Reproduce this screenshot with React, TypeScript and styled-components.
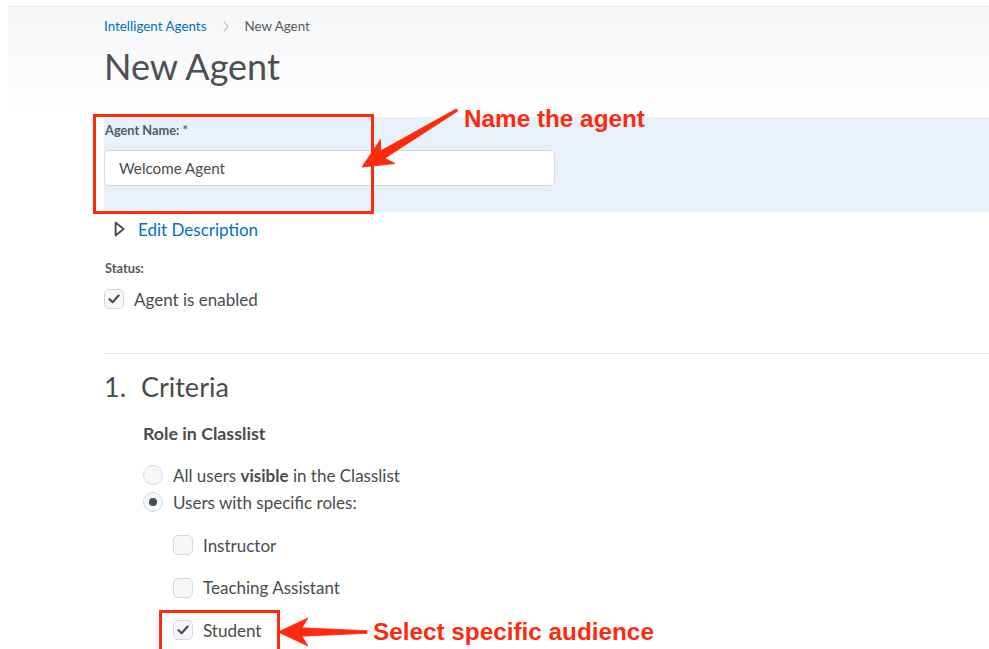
import React from "react";
import styled, { createGlobalStyle } from "styled-components";

const GlobalStyle = createGlobalStyle`
  html, body { margin: 0; padding: 0; background: #ffffff; }
  body {
    font-family: Lato, "Open Sans", "Noto Sans", sans-serif;
    color: #494c4e;
    -webkit-font-smoothing: antialiased;
  }
  * { box-sizing: border-box; }
`;

const Page = styled.div`
  position: relative;
  width: 989px;
  height: 649px;
  overflow: hidden;
  padding: 6px 0 0 8px;
`;

/* ---------- page header ---------- */

const Header = styled.header`
  height: 111px;
  border-top: 1px solid #e7e9ec;
  background: linear-gradient(#f5f6f8, #ffffff);
  padding: 10px 0 0 96px;
`;

const Breadcrumbs = styled.nav`
  display: flex;
  align-items: center;
  height: 18px;
  font-size: 13.4px;
`;

const Crumb = styled.a`
  color: #006fbf;
  text-decoration: none;
`;

const CrumbCurrent = styled.span`
  color: #565a5c;
`;

const CrumbSep = styled.svg`
  margin: 0 15px 0 17px;
  flex: none;
`;

const Title = styled.h1`
  margin: 10px 0 0;
  font-size: 36px;
  line-height: 42px;
  font-weight: 400;
  color: #4d5052;
`;

/* ---------- form ---------- */

const Content = styled.main`
  padding-left: 96px;
`;

const NameBand = styled.section`
  height: 95px;
  padding-top: 5px;
  background: #e8f1f9;
`;

const FieldLabel = styled.div<{ $gap?: number }>`
  margin-top: ${(p) => p.$gap ?? 0}px;
  padding-left: 1px;
  font-size: 12.8px;
  line-height: 16px;
  font-weight: 700;
  color: #565a5c;
`;

const TextInput = styled.input`
  display: block;
  margin-top: 12px;
  width: 451px;
  height: 36px;
  padding: 0 14px;
  border: 1px solid #d3d9e3;
  border-radius: 5px;
  background: #ffffff;
  font-family: inherit;
  font-size: 15.2px;
  color: #494c4e;
  outline: none;
`;

const Disclosure = styled.div`
  display: flex;
  align-items: center;
  gap: 13px;
  height: 20px;
  margin-top: 7px;
  padding-left: 10px;
`;

const LinkText = styled.a`
  color: #006fbf;
  font-size: 17px;
  text-decoration: none;
`;

const OptionRow = styled.label<{ $gap?: number }>`
  display: flex;
  align-items: center;
  gap: 10px;
  height: 20px;
  margin-top: ${(p) => p.$gap ?? 0}px;
  font-size: 17px;
  color: #494c4e;
`;

const CheckBox = styled.span`
  display: flex;
  align-items: center;
  justify-content: center;
  width: 20px;
  height: 20px;
  flex: none;
  border: 1px solid #d3d9e3;
  border-radius: 5px;
  background: #f6f7f8;
`;

const RadioDot = styled.span<{ $on?: boolean }>`
  display: flex;
  align-items: center;
  justify-content: center;
  width: 20px;
  height: 20px;
  flex: none;
  border: 1px solid #d3d9e3;
  border-radius: 50%;
  background: #f6f7f8;

  &::after {
    content: "";
    display: ${(p) => (p.$on ? "block" : "none")};
    width: 8px;
    height: 8px;
    border-radius: 50%;
    background: #494c4e;
  }
`;

const Divider = styled.hr`
  margin: 44px 0 0;
  border: 0;
  border-top: 1px solid #dfe3e8;
`;

const SectionHeading = styled.h2`
  display: flex;
  margin: 17px 0 0;
  font-size: 27px;
  line-height: 32px;
  font-weight: 400;
  color: #494c4e;
`;

const SectionNumber = styled.span`
  width: 37px;
  flex: none;
`;

const SectionBody = styled.div`
  padding-left: 39px;
`;

const SubHeading = styled.h3`
  margin: 20px 0 0;
  font-size: 17.8px;
  line-height: 20px;
  font-weight: 700;
  color: #494c4e;
`;

const Stack = styled.div<{ $gap: number; $top: number; $indent?: number }>`
  display: flex;
  flex-direction: column;
  gap: ${(p) => p.$gap}px;
  margin-top: ${(p) => p.$top}px;
  padding-left: ${(p) => p.$indent ?? 0}px;
`;

/* ---------- callouts drawn over the page ---------- */

const Overlay = styled.svg`
  position: absolute;
  inset: 0;
  pointer-events: none;
  overflow: visible;
`;

const Callout = styled.div<{ $x: number; $y: number }>`
  position: absolute;
  left: ${(p) => p.$x}px;
  top: ${(p) => p.$y}px;
  font-family: "Liberation Sans", Arial, sans-serif;
  font-weight: 700;
  font-size: 24.3px;
  line-height: 24px;
  color: #fe2a0e;
  white-space: nowrap;
`;

const RED = "#fe2a0e";

function Check() {
  return (
    <svg width="12" height="10" viewBox="0 0 12 10">
      <path
        d="M1.5 5.2 L4.6 8.2 L10.6 1.6"
        fill="none"
        stroke="#494c4e"
        strokeWidth="2.2"
        strokeLinecap="round"
        strokeLinejoin="round"
      />
    </svg>
  );
}

function Arrow({ x1, y1, x2, y2 }: { x1: number; y1: number; x2: number; y2: number }) {
  const dx = x2 - x1;
  const dy = y2 - y1;
  const L = Math.hypot(dx, dy);
  const deg = (Math.atan2(dy, dx) * 180) / Math.PI;
  const pts = [
    [0, -1.3],
    [L - 24, -4.2],
    [L - 30, -14],
    [L, 0],
    [L - 30, 14],
    [L - 24, 4.2],
    [0, 1.3],
  ]
    .map((p) => p.join(","))
    .join(" ");
  return (
    <g transform={`translate(${x1} ${y1}) rotate(${deg})`}>
      <polygon points={pts} fill={RED} stroke={RED} strokeWidth="0.8" strokeLinejoin="round" />
    </g>
  );
}

export default function App() {
  return (
    <>
      <GlobalStyle />
      <Page>
        <Header>
          <Breadcrumbs>
            <Crumb href="#">Intelligent Agents</Crumb>
            <CrumbSep width="6" height="11" viewBox="0 0 6 11">
              <path d="M0.8 0.8 L5 5.5 L0.8 10.2" fill="none" stroke="#b5bbc2" strokeWidth="1.1" />
            </CrumbSep>
            <CrumbCurrent>New Agent</CrumbCurrent>
          </Breadcrumbs>
          <Title>New Agent</Title>
        </Header>

        <Content>
          <NameBand>
            <FieldLabel>Agent Name: *</FieldLabel>
            <TextInput readOnly value="Welcome Agent" />
          </NameBand>

          <Disclosure>
            <svg width="11" height="16" viewBox="0 0 11 16">
              <path
                d="M1.6 1.6 L9.6 8 L1.6 14.4 Z"
                fill="none"
                stroke="#494c4e"
                strokeWidth="1.9"
                strokeLinejoin="round"
              />
            </svg>
            <LinkText href="#">Edit Description</LinkText>
          </Disclosure>

          <FieldLabel $gap={21}>Status:</FieldLabel>
          <OptionRow $gap={13}>
            <CheckBox>
              <Check />
            </CheckBox>
            Agent is enabled
          </OptionRow>

          <Divider />

          <SectionHeading>
            <SectionNumber>1.</SectionNumber>
            Criteria
          </SectionHeading>

          <SectionBody>
            <SubHeading>Role in Classlist</SubHeading>

            <Stack $gap={7} $top={22}>
              <OptionRow>
                <RadioDot />
                <span>
                  All users <b>visible</b> in the Classlist
                </span>
              </OptionRow>
              <OptionRow>
                <RadioDot $on />
                Users with specific roles:
              </OptionRow>
            </Stack>

            <Stack $gap={22.5} $top={23} $indent={30}>
              <OptionRow>
                <CheckBox />
                Instructor
              </OptionRow>
              <OptionRow>
                <CheckBox />
                Teaching Assistant
              </OptionRow>
              <OptionRow>
                <CheckBox>
                  <Check />
                </CheckBox>
                Student
              </OptionRow>
            </Stack>
          </SectionBody>
        </Content>

        <Overlay width="989" height="649" viewBox="0 0 989 649">
          <rect x="94.5" y="115.5" width="278" height="97" fill="none" stroke={RED} strokeWidth="3" />
          <rect x="160.5" y="611.5" width="118" height="60" fill="none" stroke={RED} strokeWidth="3" />
          <Arrow x1={457} y1={110} x2={362} y2={167} />
          <Arrow x1={367} y1={632} x2={278} y2={632} />
        </Overlay>
        <Callout $x={464} $y={107}>Name the agent</Callout>
        <Callout $x={373} $y={620}>Select specific audience</Callout>
      </Page>
    </>
  );
}
